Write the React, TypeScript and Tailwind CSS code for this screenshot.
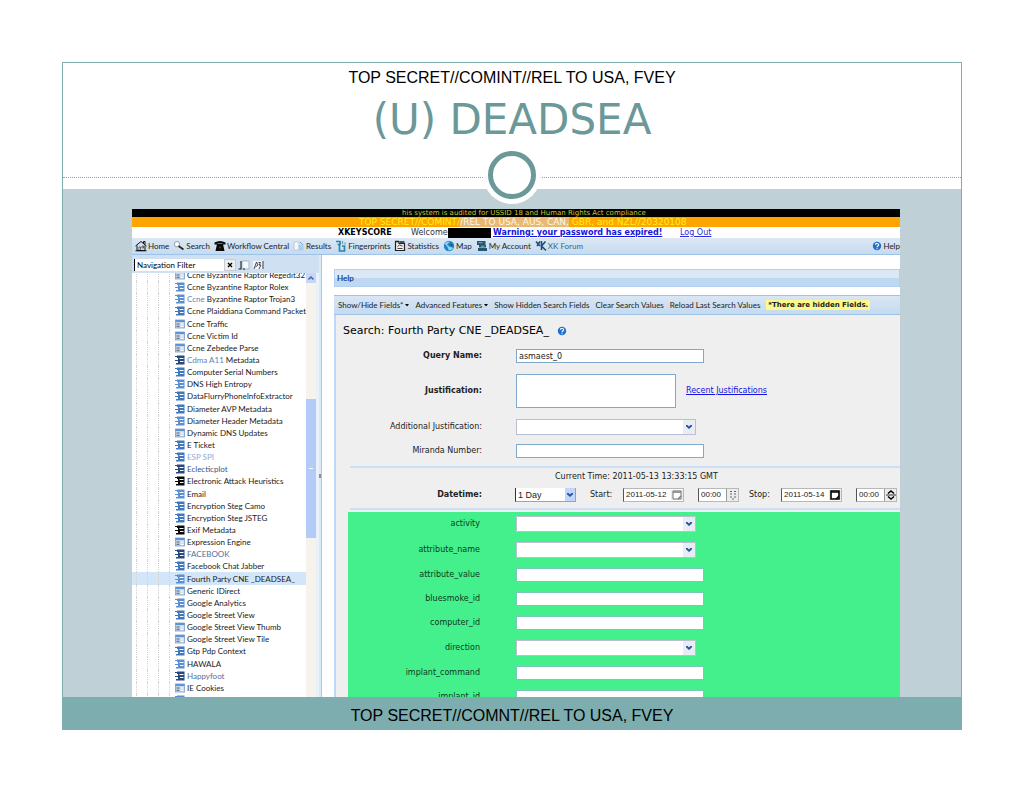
import type { ReactNode } from "react";

type Tone = "mid" | "pale" | "blue" | "dark" | "black";
type TreeItem = { name: string; tone: Tone; text?: string; lead?: number };

const tree: TreeItem[] = [
  { name: "Ccne Byzantine Raptor Regedit32", tone: "pale" },
  { name: "Ccne Byzantine Raptor Rolex", tone: "mid" },
  { name: "Ccne Byzantine Raptor Trojan3", tone: "mid", lead: 4 },
  { name: "Ccne Plaiddiana Command Packet", tone: "blue" },
  { name: "Ccne Traffic", tone: "pale" },
  { name: "Ccne Victim Id", tone: "pale" },
  { name: "Ccne Zebedee Parse", tone: "pale" },
  { name: "Cdma A11 Metadata", tone: "dark", lead: 8 },
  { name: "Computer Serial Numbers", tone: "blue" },
  { name: "DNS High Entropy", tone: "mid" },
  { name: "DataFlurryPhoneInfoExtractor", tone: "blue" },
  { name: "Diameter AVP Metadata", tone: "blue" },
  { name: "Diameter Header Metadata", tone: "mid" },
  { name: "Dynamic DNS Updates", tone: "pale" },
  { name: "E Ticket", tone: "blue" },
  { name: "ESP SPI", tone: "blue", text: "text-[#8fabdb]" },
  { name: "Eclecticplot", tone: "dark", text: "text-[#3a5580]" },
  { name: "Electronic Attack Heuristics", tone: "black" },
  { name: "Email", tone: "mid" },
  { name: "Encryption Steg Camo", tone: "blue" },
  { name: "Encryption Steg JSTEG", tone: "blue" },
  { name: "Exif Metadata", tone: "black" },
  { name: "Expression Engine", tone: "pale" },
  { name: "FACEBOOK", tone: "dark", text: "text-[#4f6f9f]" },
  { name: "Facebook Chat Jabber", tone: "blue" },
  { name: "Fourth Party CNE _DEADSEA_", tone: "mid" },
  { name: "Generic IDirect", tone: "pale" },
  { name: "Google Analytics", tone: "mid" },
  { name: "Google Street View", tone: "blue" },
  { name: "Google Street View Thumb", tone: "pale" },
  { name: "Google Street View Tile", tone: "pale" },
  { name: "Gtp Pdp Context", tone: "blue" },
  { name: "HAWALA", tone: "mid" },
  { name: "Happyfoot", tone: "dark", text: "text-[#4f6f9f]" },
  { name: "IE Cookies", tone: "pale" },
  { name: "iMail", tone: "mid" },
];

const toneColor: Record<Tone, string> = {
  mid: "#5c8fd0",
  pale: "#7f9cc4",
  blue: "#3f78bd",
  dark: "#27497c",
  black: "#0a0a0a",
};

function FormIcon({ tone }: { tone: Tone }) {
  const c = toneColor[tone];
  return (
    <svg viewBox="0 0 10 10" className="size-2.5 shrink-0" aria-hidden="true">
      {tone === "pale" ? (
        <>
          <rect x="0.500" y="1" width="9" height="8" fill="#c9d6e8" stroke={c} strokeWidth="0.800" />
          <rect x="0.500" y="1" width="9" height="2" fill="#5e93d8" />
          <path d="M1.500 5h3M1.500 7.300h3" stroke="#52647c" strokeWidth="1" />
          <path d="M5.500 5H8.500M5.500 7.300H8.500" stroke="#fff" strokeWidth="1.200" />
        </>
      ) : (
        <>
          <path d="M2 0.500H9.500V9.500H1V8H3V6H0V5H3V3H2z" fill={c} />
          <path d="M0 1.500h4" stroke={c} strokeWidth="1" />
          <path d="M4.500 3.500h4M5 6.500h3.500" stroke="#fff" strokeWidth="1" />
        </>
      )}
    </svg>
  );
}

function HelpIcon() {
  return (
    <svg viewBox="0 0 10 10" className="size-2.5 shrink-0" aria-hidden="true">
      <circle cx="5" cy="5" r="4.200" fill="#1e6fcb" />
      <path d="M3.400 3.800C3.500 2 6.800 2 6.600 4 6.500 5 5 5 5 6.300M5 7.200v1" stroke="#fff" strokeWidth="1.200" fill="none" />
    </svg>
  );
}

const icon = "size-3 shrink-0";

const menu: { label: string; icon: ReactNode; muted?: string }[] = [
  {
    label: "Home",
    icon: (
      <svg viewBox="0 0 12 12" className={icon}>
        <path d="M0.500 6L6 1.500 11.500 6M2 5.500V10.500H10V5.500M0.500 10.800H11.500M8.500 3V1.500H10V4.500" fill="none" stroke="#111" strokeWidth="1" />
        <path d="M4 10V7h1.500v3M7 6h1.500v2H7z" fill="#fff" stroke="#111" strokeWidth="0.600" />
      </svg>
    ),
  },
  {
    label: "Search",
    icon: (
      <svg viewBox="0 0 12 12" className={icon}>
        <circle cx="4" cy="4.200" r="2.700" fill="#fff" stroke="#8a949e" strokeWidth="0.900" />
        <path d="M5.500 6L10.500 9.500" stroke="#222" strokeWidth="1.600" />
      </svg>
    ),
  },
  {
    label: "Workflow Central",
    icon: (
      <svg viewBox="0 0 12 12" className={icon}>
        <path d="M0.500 4V2.500Q6 -0.500 11.500 2.500V4.500H8.500V3.500H3.500V4.500H0.500zM3 4H9L10.500 11H1.500z" fill="#0a0a0a" />
        <circle cx="6" cy="7.500" r="1" fill="#444" />
      </svg>
    ),
  },
  {
    label: "Results",
    icon: (
      <svg viewBox="0 0 12 12" className={icon}>
        <path d="M1 2h5v8H1z" fill="#f5f7fa" stroke="#b6c3d1" strokeWidth="0.800" />
        <path d="M5.500 5h5v5.500h-5z" fill="#a9cff0" />
        <path d="M7 2l3 3" stroke="#72add9" strokeWidth="1" />
      </svg>
    ),
  },
  {
    label: "Fingerprints",
    icon: (
      <svg viewBox="0 0 12 12" className={icon}>
        <path d="M1 1.500h4v3H2.500M4.500 4.500v6.500h5V6H7" fill="none" stroke="#2c86ad" strokeWidth="1.700" />
        <path d="M7.500 1v3M10 2.500v2" stroke="#59a8c8" strokeWidth="1.300" />
      </svg>
    ),
  },
  {
    label: "Statistics",
    icon: (
      <svg viewBox="0 0 12 12" className={icon}>
        <path d="M1.500 1.500V10.500H10.500V3.500H5V1.500z" fill="#eee" stroke="#222" strokeWidth="1.200" />
        <path d="M3.500 6.500L5.500 5 8.500 6M3.500 8.500h5" fill="none" stroke="#333" strokeWidth="0.900" />
        <path d="M1 1.500h4M6 2h4.500" stroke="#222" strokeWidth="1.400" />
      </svg>
    ),
  },
  {
    label: "Map",
    icon: (
      <svg viewBox="0 0 12 12" className={icon}>
        <circle cx="6" cy="6" r="5.200" fill="#1f86c6" />
        <path d="M1.500 3.500Q4 1 7 1.500L4 4.500 6 6.500 10.500 8Q8 11 5.500 10.500 6 8 1.500 3.500z" fill="#8ed3f3" />
        <path d="M7 3.500L10.500 5.500 8 6z" fill="#0b4e8e" />
      </svg>
    ),
  },
  {
    label: "My Account",
    icon: (
      <svg viewBox="0 0 12 12" className={icon}>
        <path d="M1 1h8.500v4H1zM3 5h7v2.500H3zM2 8h9v3H2z" fill="#24566f" />
        <path d="M2.500 2.700h4M5 6.200h3.500" stroke="#9cc3da" strokeWidth="0.800" />
      </svg>
    ),
  },
  {
    label: "XK Forum",
    muted: "text-[#35678c]",
    icon: (
      <svg viewBox="0 0 12 12" className={icon}>
        <path d="M1 1.500L5 6M5 1.500L2 6M6.500 1v9M10.500 1.500L6.500 6 11 10.500" fill="none" stroke="#1d4e74" strokeWidth="1.600" />
      </svg>
    ),
  },
];

function Chevron() {
  return (
    <svg viewBox="0 0 8 6" className="h-1.5 w-2" aria-hidden="true">
      <path d="M1 1h1.500L4 2.500 5.500 1H7v1.200L4 5 1 2.200z" fill="#1f55a0" />
    </svg>
  );
}

function Combo({ id }: { id: string }) {
  return (
    <div className="flex h-4 w-[180px] items-stretch border border-[#b9bfd0] bg-white">
      <select id={id} className="min-w-0 flex-1 appearance-none bg-transparent outline-none" />
      <span className="flex w-3 items-center justify-center bg-[#e9ecf2]">
        <Chevron />
      </span>
    </div>
  );
}

function Row({ id, label, bold, children }: { id: string; label: string; bold?: boolean; children: ReactNode }) {
  return (
    <div className="flex items-center">
      <label htmlFor={id} className={bold ? "w-[146px] text-right font-bold" : "w-[146px] text-right"}>
        {label}
      </label>
      <div className="ml-[34px] flex items-center">{children}</div>
    </div>
  );
}

const fields: { name: string; combo?: boolean }[] = [
  { name: "activity", combo: true },
  { name: "attribute_name", combo: true },
  { name: "attribute_value" },
  { name: "bluesmoke_id" },
  { name: "computer_id" },
  { name: "direction", combo: true },
  { name: "implant_command" },
  { name: "implant_id" },
];

const textBox = "block h-3.5 w-[188px] border border-[#7fa9cd] bg-white px-0.5 outline-none";

function DateBox({ label, value, dark }: { label: string; value: string; dark?: boolean }) {
  return (
    <div className="flex h-3.5 w-[61px] items-center border border-[#b8b8b8] border-l-[#555] bg-white">
      <input aria-label={label} defaultValue={value} className="w-12 min-w-0 flex-1 pl-0.5 font-['Liberation_Sans',sans-serif] outline-none" />
      <button type="button" aria-label={label + " calendar"} className="flex w-3 justify-center bg-[#e8e8e8]">
        <svg viewBox="0 0 10 10" className="size-2.5">
          <path d="M1 1h8v8H1z" fill="#fff" stroke={dark ? "#000" : "#777"} strokeWidth={dark ? 1.6 : 1} />
          <path d="M1 2.200h8M9 6L6 9" stroke={dark ? "#000" : "#777"} strokeWidth="1.200" />
        </svg>
      </button>
    </div>
  );
}

function TimeBox({ label, dark }: { label: string; dark?: boolean }) {
  return (
    <div className="flex h-3.5 w-[41px] items-center border border-[#b8b8b8] border-l-[#555] bg-white">
      <input aria-label={label} defaultValue="00:00" className="w-6 min-w-0 flex-1 pl-0.5 font-['Liberation_Sans',sans-serif] outline-none" />
      <button type="button" aria-label={label + " step"} className="flex w-3 justify-center border-l border-[#999] bg-[#ececec]">
        {dark ? (
          <svg viewBox="0 0 10 12" className="h-3 w-2.5">
            <path d="M2 4.500L5 2 8 4.500M2 7.500L5 10 8 7.500" fill="none" stroke="#000" strokeWidth="1.600" />
            <path d="M0 6h10" stroke="#000" strokeWidth="0.800" />
          </svg>
        ) : (
          <svg viewBox="0 0 10 12" className="h-3 w-2.5">
            <path d="M2 2.500h2M6 2.500h2M2 5h2M6 5h2M2 8h2M6 8h2M4 10h2" stroke="#666" strokeWidth="1.100" />
          </svg>
        )}
      </button>
    </div>
  );
}

function Sidebar() {
  return (
    <aside className="flex w-[187px] shrink-0 flex-col bg-[#cfe0f2] font-[Lato,sans-serif] text-[8px]">
      <div className="flex h-[18px] shrink-0 items-end pb-0.5 pl-0.5">
        <input
          aria-label="Navigation Filter"
          defaultValue="Navigation Filter"
          className="h-3 w-[90px] border-l border-black bg-white pl-0.5 outline-none"
        />
        <button aria-label="Clear filter" className="flex h-3 w-3 items-center justify-center border border-[#c5ccd6] bg-[#eee]">
          <svg viewBox="0 0 8 8" className="size-2">
            <path d="M2 2l4 4M6 2L2 6" stroke="#000" strokeWidth="1.400" />
          </svg>
        </button>
        <button aria-label="Expand all" className="ml-0.5 flex h-3 w-3 items-center justify-center">
          <svg viewBox="0 0 12 12" className="size-3">
            <path d="M4 2h7v8H4z" fill="#f6f8fb" stroke="#8fa3ba" strokeWidth="0.700" />
            <path d="M3 2v8H0.500M5 10h2" stroke="#222" strokeWidth="1.100" fill="none" />
          </svg>
        </button>
        <button aria-label="Collapse all" className="ml-0.5 flex h-3 w-3 items-center justify-center">
          <svg viewBox="0 0 12 12" className="size-3">
            <path d="M1 2h9v8H1z" fill="#f6f8fb" />
            <path d="M2 10L4.500 3 6 6 3.500 8M6.500 3.500h2l-1.500 2.500h2L7 10M11 2v8" stroke="#333" strokeWidth="0.900" fill="none" />
          </svg>
        </button>
      </div>
      <div className="flex min-h-0 flex-1 bg-[#e9f1fa] pr-[3px]">
        <ul className="-mt-1 grid h-[437px] min-w-0 flex-1 auto-rows-fr bg-white [clip-path:inset(4px_0_0_0)]">
          {tree.map((item) => (
            <li
              key={item.name}
              className={
                item.name.startsWith("Fourth")
                  ? "flex items-center bg-[#d3e6f9] pl-1"
                  : "flex items-center pl-1"
              }
            >
              {[0, 1, 2].map((n) => (
                <span key={n} className="w-[11px] shrink-0 self-stretch border-l border-dotted border-[#d2d2d2]" />
              ))}
              <span className="w-1.5 shrink-0 self-stretch border-l border-dotted border-[#d2d2d2]" />
              <FormIcon tone={item.tone} />
              <a href="#" className={"ml-0.5 leading-3 whitespace-nowrap " + (item.text ?? "text-[#1a1a1a]")}>
                {item.lead ? (
                  <>
                    <span className="text-[#5f83b5]">{item.name.slice(0, item.lead)}</span>
                    {item.name.slice(item.lead)}
                  </>
                ) : (
                  item.name
                )}
              </a>
            </li>
          ))}
        </ul>
        <div className="flex w-2.5 shrink-0 flex-col bg-[#f5f3ec]">
          <div className="flex h-2.5 items-center justify-center bg-[#c5d7f8]">
            <svg viewBox="0 0 8 8" className="size-2">
              <path d="M1.500 5.500L4 3l2.500 2.500" fill="none" stroke="#4a6797" strokeWidth="1.500" />
            </svg>
          </div>
          <div className="mt-[116px] flex h-[139px] flex-col items-center justify-center bg-[#b4cbf7]">
            <span className="h-px w-1 bg-white" />
          </div>
        </div>
      </div>
    </aside>
  );
}

function SearchPanel() {
  return (
    <main className="flex min-w-0 flex-1 flex-col bg-white pt-3.5 pl-3">
      <div className="flex h-[18px] shrink-0 items-center border border-[#b3d0f0] bg-linear-to-b from-[#dbe9f7] from-50% to-[#bfd8f1] to-50% pl-0.5 font-[Lato,sans-serif] text-[8px] font-bold text-[#17428c]">
        Help
      </div>
      <div className="mt-2 flex h-5 shrink-0 items-center gap-1.5 border-y border-[#9fc3e8] bg-linear-to-b from-[#d9e6f4] to-[#c4daf0] pl-1 font-[Lato,sans-serif] text-[8px] whitespace-nowrap text-[#222]">
        <button className="flex items-center gap-0.5">
          Show/Hide Fields*
          <svg viewBox="0 0 4 4" className="size-1"><path d="M0 1h4L2 3.500z" /></svg>
        </button>
        <button className="flex items-center gap-0.5">
          Advanced Features
          <svg viewBox="0 0 4 4" className="size-1"><path d="M0 1h4L2 3.500z" /></svg>
        </button>
        <button>Show Hidden Search Fields</button>
        <button>Clear Search Values</button>
        <button>Reload Last Search Values</button>
        <strong className="bg-[#fdf98c] px-0.5 font-['DejaVu_Sans',sans-serif] text-[7px] leading-[10px]">*There are hidden Fields.</strong>
      </div>
      <form className="flex min-h-0 flex-1 flex-col border-l-2 border-[#bcd9f8] bg-[#efefef] font-['DejaVu_Sans',sans-serif] text-[8px] leading-[10px] text-[#222]">
        <h2 className="flex items-center gap-2 pt-2.5 pl-[7px] text-[11px] leading-3 text-black">
          Search: Fourth Party CNE _DEADSEA_ <HelpIcon />
        </h2>
        <div className="mt-3 flex shrink-0 flex-col gap-[11px]">
          <Row id="query" label="Query Name:" bold>
            <input id="query" defaultValue="asmaest_0" className={textBox} />
          </Row>
          <Row id="justification" label="Justification:" bold>
            <textarea id="justification" className="block h-[34px] w-40 resize-none border border-[#7fa9cd] bg-white outline-none" />
            <a href="#" className="ml-2.5 text-[#1414e0] underline">Recent Justifications</a>
          </Row>
          <Row id="additional" label="Additional Justification:">
            <Combo id="additional" />
          </Row>
          <div className="-mt-0.5">
            <Row id="miranda" label="Miranda Number:">
              <input id="miranda" className={textBox} />
            </Row>
          </div>
        </div>
        <hr className="mt-2 ml-3.5 border-t-2 border-[#c9e0f8]" />
        <p className="mt-1 pl-[219px]">Current Time: 2011-05-13 13:33:15 GMT</p>
        <div className="mt-1.5 flex h-4 items-center">
          <label htmlFor="range" className="w-[146px] text-right font-bold">Datetime:</label>
          <div className="ml-[33px] flex h-3.5 w-[61px] items-center border-x border-b border-[#7fa9cd] border-l-[#333] bg-white">
            <select id="range" className="min-w-0 flex-1 appearance-none pl-0.5 font-['Liberation_Sans',sans-serif] text-[9px] outline-none">
              <option>1 Day</option>
            </select>
            <span className="flex h-full w-2.5 items-center justify-center bg-[#c3d6fa]"><Chevron /></span>
          </div>
          <span className="ml-3.5 w-[33px]">Start:</span>
          <DateBox label="Start date" value="2011-05-12" />
          <span className="w-3.5" />
          <TimeBox label="Start time" />
          <span className="ml-2.5 w-8">Stop:</span>
          <DateBox label="Stop date" value="2011-05-14" dark />
          <span className="w-3.5" />
          <TimeBox label="Stop time" dark />
        </div>
        <hr className="mt-1.5 ml-3.5 border-t-2 border-[#c9e0f8]" />
        <div className="mt-0.5 ml-3 flex flex-1 flex-col gap-2.5 bg-[#44f08c] pt-1 text-[#0b3a20]">
          {fields.map((f) => (
            <div key={f.name} className="flex items-center">
              <label htmlFor={f.name} className="w-[132px] text-right">{f.name}</label>
              <div className="ml-9">
                {f.combo ? (
                  <Combo id={f.name} />
                ) : (
                  <input id={f.name} className="block h-3.5 w-[188px] border border-[#7cc9b9] bg-white outline-none" />
                )}
              </div>
            </div>
          ))}
        </div>
      </form>
    </main>
  );
}

export default function App() {
  return (
    <div className="bg-white px-[62px] pt-[62px] pb-[61px] font-['Liberation_Sans',sans-serif]">
      <section className="border border-[#7dadaf]">
        <header className="relative flex h-[126px] flex-col items-center text-center">
          <p className="mt-1.5 text-[16px] leading-[18px] text-black">TOP SECRET//COMINT//REL TO USA, FVEY</p>
          <h1 className="mt-2 font-['DejaVu_Sans',sans-serif] text-[42px] leading-[50px] text-[#6b9899]">(U) DEADSEA</h1>
          <div className="absolute inset-x-0 top-[114px] border-t border-dotted border-[#7dadaf]" />
          <div className="absolute top-[83px] left-1/2 z-10 flex size-[58px] -translate-x-1/2 items-center justify-center rounded-full bg-white">
            <div className="size-12 rounded-full border-5 border-[#6b9899]" />
          </div>
        </header>
        <div className="bg-[#bfd0d7] pt-5 pr-[61px] pl-[69px]">
          <div className="bg-white">
            <div className="h-2 overflow-hidden bg-black pl-[270px] font-['DejaVu_Sans',sans-serif] text-[7px] leading-2 whitespace-nowrap text-[#c9c62c]">
              his system is audited for USSID 18 and Human Rights Act compliance
            </div>
            <div className="h-2.5 bg-[#ffa500] pl-[227px] font-['DejaVu_Sans',sans-serif] text-[9px] leading-[10px] whitespace-nowrap text-[#ffee1c]">
              TOP SECRET//COMINT/
              <span className="bg-[#e9b973] text-[#fff6e6]">/REL TO USA, AUS, CAN,</span> GBR, and NZL//20320108
            </div>
            <div className="flex h-[11px] items-center pl-[206px] font-['DejaVu_Sans',sans-serif] text-[8px] leading-[11px] whitespace-nowrap text-[#333]">
              <strong className="w-[73px] text-black">XKEYSCORE</strong>
              <span className="w-[37px]">Welcome</span>
              <span className="h-2.5 w-[43px] bg-black" />
              <a href="#" className="ml-0.5 w-[187px] font-bold text-[#1414e0] underline">Warning: your password has expired!</a>
              <a href="#" className="text-[#2a2ae0] underline">Log Out</a>
            </div>
            <nav className="flex h-[17px] items-center gap-1 border-b border-[#9fc3e8] bg-linear-to-b from-[#dce8f3] to-[#c6dbf0] pl-[3px] font-[Lato,sans-serif] text-[8px] whitespace-nowrap text-[#222]">
              {menu.map((m) => (
                <button key={m.label} className={"flex items-center gap-px " + (m.muted ?? "")}>
                  {m.icon}
                  {m.label}
                </button>
              ))}
              <button className="ml-auto flex items-center gap-px">
                <HelpIcon />
                Help
              </button>
            </nav>
            <div className="flex h-[442px] overflow-hidden">
              <Sidebar />
              <div className="flex w-[3px] shrink-0 items-center border-r border-[#a6c8ee] bg-[#dce9f7]">
                <span className="h-1 w-0.5 bg-[#8a8f96]" />
              </div>
              <SearchPanel />
            </div>
          </div>
        </div>
        <footer className="h-8 bg-[#7dadaf] pt-2.5 text-center text-[16px] leading-[18px] text-black">
          TOP SECRET//COMNT//REL TO USA, FVEY
        </footer>
      </section>
    </div>
  );
}
